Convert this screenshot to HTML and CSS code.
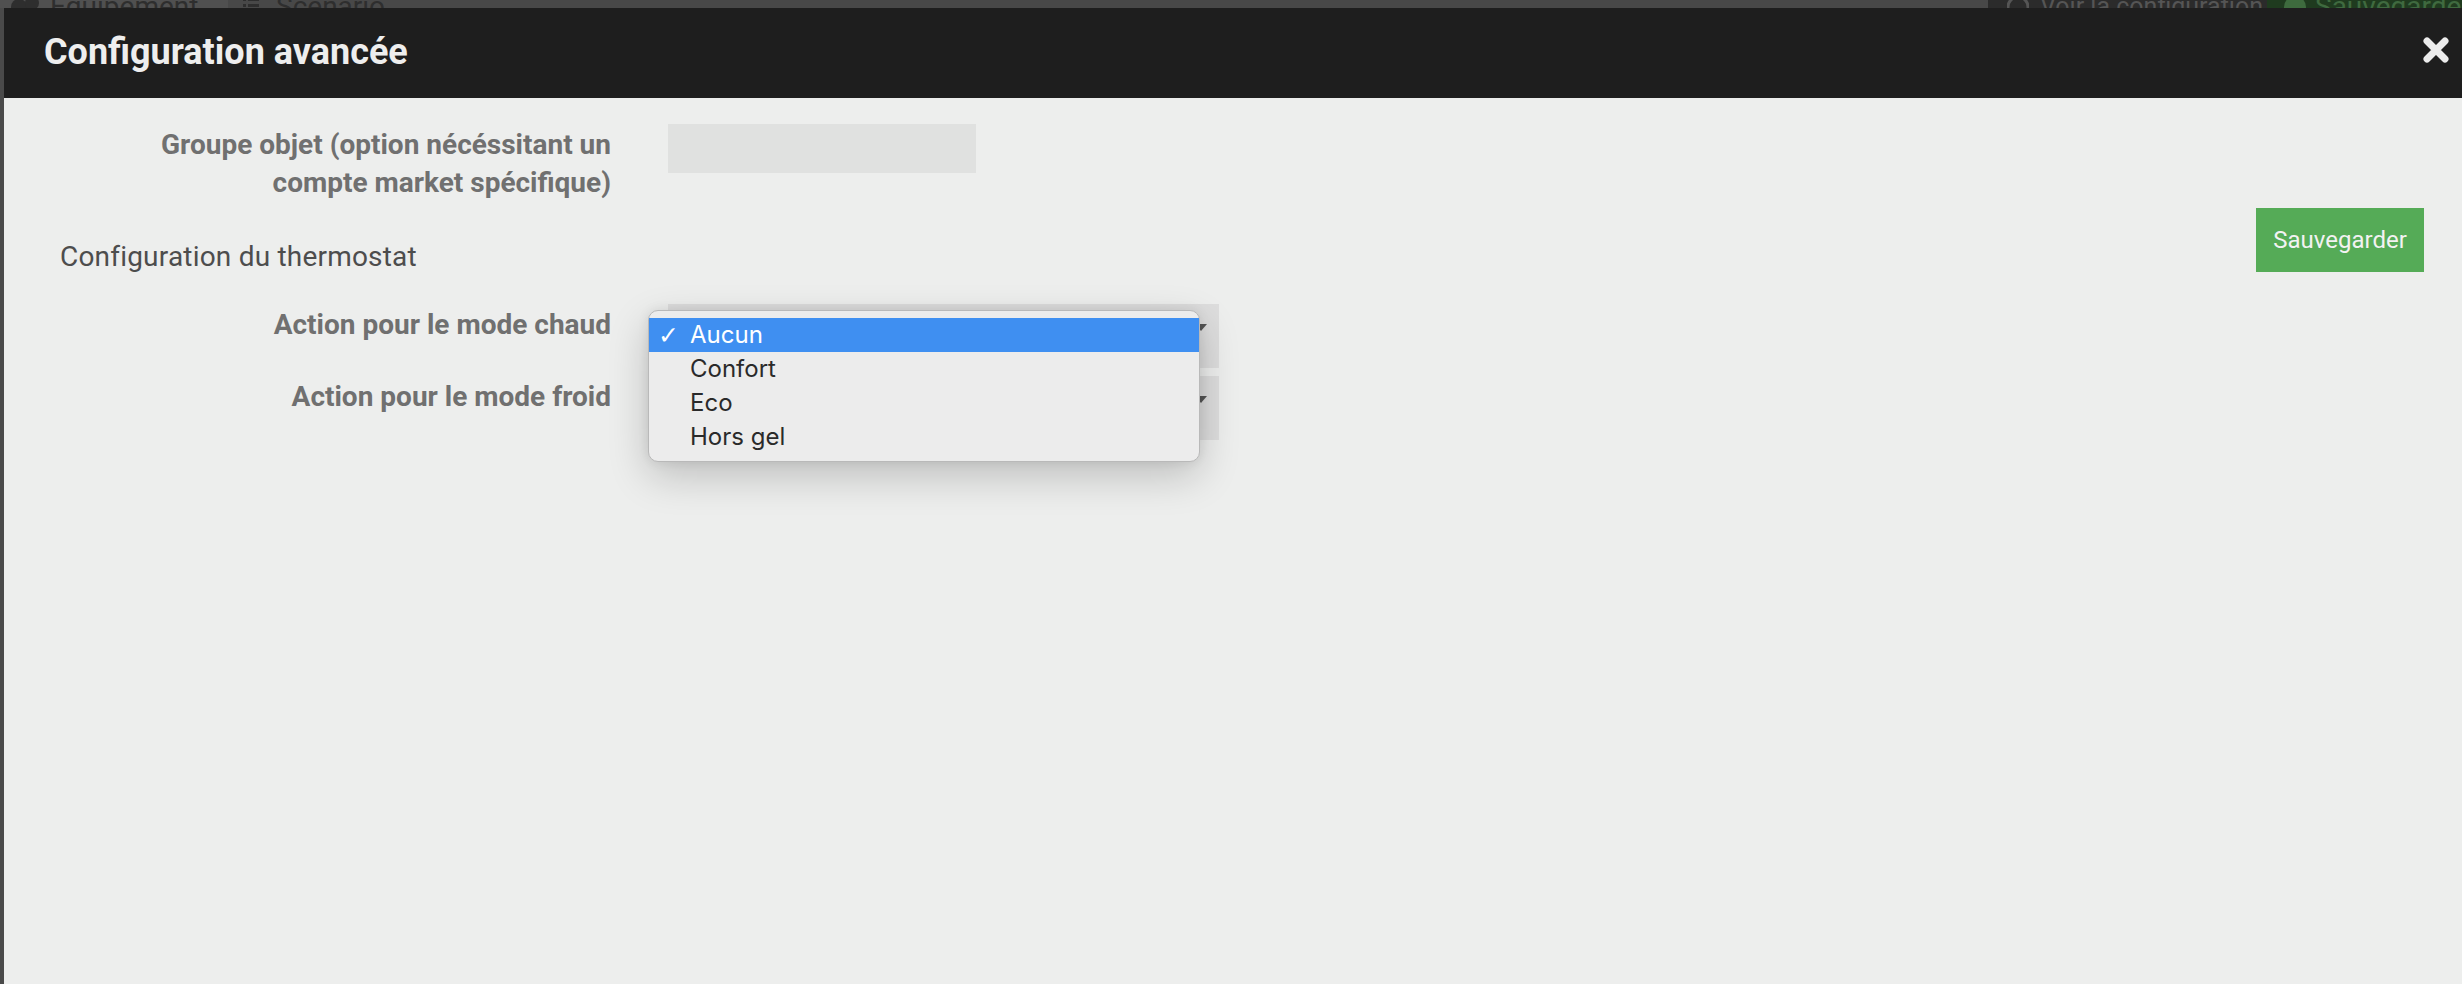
FILE: index.html
```html
<!DOCTYPE html>
<html lang="fr">
<head>
<meta charset="utf-8">
<title>Configuration avancée</title>
<link rel="stylesheet" href="styles.css">
</head>
<body>
<div class="topbar">
  <div class="tb-tab tb-tab-first">
    <svg class="tb-icon" width="30" height="26" viewBox="0 0 30 26"><circle cx="9" cy="13" r="8" fill="#2e2e2e"/><circle cx="22" cy="9" r="7" fill="#2e2e2e"/></svg>
    <span>Équipement</span>
  </div>
  <div class="tb-tab tb-tab-rest">
    <svg class="tb-icon" width="16" height="26" viewBox="0 0 16 26"><rect x="0" y="4" width="3" height="3" fill="#2e2e2e"/><rect x="5" y="4" width="11" height="3" fill="#2e2e2e"/><rect x="0" y="10" width="3" height="3" fill="#2e2e2e"/><rect x="5" y="10" width="11" height="3" fill="#2e2e2e"/></svg>
    <span>Scénario</span>
  </div>
  <div class="tb-btn tb-view">
    <svg class="tb-icon" width="22" height="26" viewBox="0 0 22 26"><circle cx="11" cy="13" r="10" fill="none" stroke="#555" stroke-width="3"/></svg>
    <span>Voir la configuration</span>
  </div>
  <div class="tb-btn tb-save">
    <svg class="tb-icon" width="22" height="26" viewBox="0 0 22 26"><circle cx="11" cy="13" r="11" fill="#3e6b3e"/></svg>
    <span>Sauvegarder</span>
  </div>
</div>

<div class="modal">
  <div class="modal-header">
    <h1 class="modal-title">Configuration avancée</h1>
    <button class="modal-close" aria-label="Fermer">
      <svg width="26" height="26" viewBox="0 0 26 26"><path d="M4 4 L22 22 M22 4 L4 22" stroke="#ececec" stroke-width="7" stroke-linecap="round"/></svg>
    </button>
  </div>
  <div class="modal-body">
    <div class="form-row form-row-first">
      <label class="form-label">Groupe objet (option nécéssitant un compte market spécifique)</label>
      <div class="form-control input-box"></div>
    </div>

    <div class="legend-row">
      <div class="legend">Configuration du thermostat</div>
      <button class="btn-save">Sauvegarder</button>
    </div>

    <div class="form-row">
      <label class="form-label">Action pour le mode chaud</label>
      <div class="select-wrap">
        <div class="form-control select-box"><span class="select-arrow"></span></div>
        <ul class="dropdown">
          <li class="dd-item dd-selected"><span class="dd-check">✓</span>Aucun</li>
          <li class="dd-item">Confort</li>
          <li class="dd-item">Eco</li>
          <li class="dd-item">Hors gel</li>
        </ul>
      </div>
    </div>

    <div class="form-row form-row-tight">
      <label class="form-label">Action pour le mode froid</label>
      <div class="select-wrap">
        <div class="form-control select-box"><span class="select-arrow"></span></div>
      </div>
    </div>
  </div>
</div>
</body>
</html>
```

FILE: styles.css
```css
html, body {
  margin: 0;
  padding: 0;
}
body {
  width: 2462px;
  height: 984px;
  overflow: hidden;
  background: #4a4a4a;
  font-family: Roboto, "Liberation Sans", sans-serif;
}

/* ---------- page behind the dialog ---------- */
.topbar {
  display: flex;
  height: 8px;
  overflow: hidden;
  font-size: 28px;
  line-height: 30px;
}
.tb-tab, .tb-btn {
  display: flex;
  align-items: flex-start;
  margin-top: -8px;
  height: 40px;
  box-sizing: border-box;
  white-space: nowrap;
  overflow: hidden;
}
.tb-icon {
  flex: none;
  margin-top: 2px;
}
.tb-tab-first {
  flex: none;
  width: 228px;
  padding-left: 10px;
  gap: 10px;
  background: #505050;
  color: #2e2e2e;
}
.tb-tab-rest {
  flex: none;
  width: 1760px;
  padding-left: 15px;
  gap: 17px;
  background: #484848;
  color: #2e2e2e;
}
.tb-view {
  flex: none;
  width: 279px;
  padding-left: 19px;
  gap: 11px;
  background: #2b2b2b;
  color: #555555;
  font-size: 25px;
}
.tb-save {
  flex: 1 1 0;
  min-width: 0;
  padding-left: 17px;
  gap: 9px;
  background: #1f3b1f;
  color: #3f6a3f;
}

/* ---------- dialog ---------- */
.modal {
  margin-left: 4px;
  height: 976px;
  background: #edeeed;
  display: flex;
  flex-direction: column;
}
.modal-header {
  height: 90px;
  flex: none;
  background: #1e1e1e;
  display: flex;
  align-items: center;
  justify-content: space-between;
  padding: 0 13px 0 40px;
}
.modal-title {
  margin: 0;
  font-size: 36px;
  font-weight: 700;
  color: #eeeeee;
  line-height: 1;
  padding-bottom: 2px;
}
.modal-close {
  border: 0;
  background: none;
  padding: 0;
  width: 26px;
  height: 26px;
  margin-bottom: 6px;
  display: block;
}
.modal-close svg { display: block; }

.modal-body {
  padding: 26px 38px 0 0;
}

.form-row {
  display: grid;
  grid-template-columns: 607px 551px;
  column-gap: 57px;
  align-items: start;
}
.form-row-first {
  grid-template-columns: 607px 308px;
  margin-bottom: 6px;
}
.form-row-tight {
  margin-top: 8px;
}
.form-label {
  text-align: right;
  font-weight: 700;
  font-size: 28px;
  line-height: 38px;
  color: #707070;
  padding-top: 2px;
  padding-left: 150px;
}
.form-control {
  box-sizing: border-box;
}
.input-box {
  height: 49px;
  background: #e0e1e0;
}

.legend-row {
  display: flex;
  justify-content: space-between;
  align-items: flex-start;
  height: 68px;
  margin-bottom: 28px;
}
.legend {
  padding-top: 30px;
  padding-left: 56px;
  font-size: 28px;
  line-height: 38px;
  letter-spacing: 0.2px;
  color: #4d4d4d;
}
.btn-save {
  border: 0;
  width: 168px;
  height: 64px;
  background: #55ab57;
  color: #f2f2f2;
  font-family: Roboto, "Liberation Sans", sans-serif;
  font-size: 24px;
  padding: 0;
}

.select-wrap {
  position: relative;
}
.select-box {
  height: 64px;
  background: #dddddd;
  position: relative;
}
.select-arrow {
  position: absolute;
  right: 12px;
  top: 20px;
  width: 0;
  height: 0;
  border-left: 6px solid transparent;
  border-right: 6px solid transparent;
  border-top: 7px solid #555555;
}

/* native-style open menu */
.dropdown {
  position: absolute;
  left: -20px;
  top: 6px;
  width: 552px;
  margin: 0;
  padding: 7px 0;
  list-style: none;
  box-sizing: border-box;
  background: #ececec;
  border: 1px solid #b9b9b9;
  border-radius: 10px;
  box-shadow: 0 14px 40px rgba(0, 0, 0, 0.2), 0 0 12px rgba(0, 0, 0, 0.08);
  font-family: Inter, "Noto Sans", sans-serif;
  font-size: 24px;
  color: #2a2a2a;
  z-index: 5;
}
.dd-item {
  height: 34px;
  line-height: 34px;
  padding-left: 41px;
  position: relative;
}
.dd-selected {
  background: #3f8ff1;
  color: #ffffff;
}
.dd-check {
  position: absolute;
  left: 9px;
  top: 1px;
  font-family: "DejaVu Sans", sans-serif;
  font-size: 25px;
}
```
